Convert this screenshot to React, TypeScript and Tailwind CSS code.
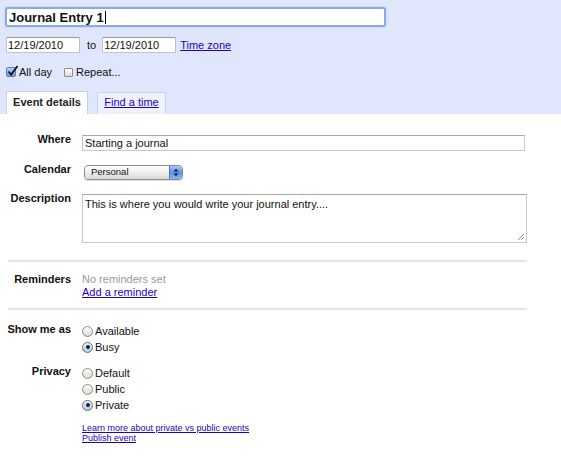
import React from 'react';

const font = "font-['Liberation_Sans',Arial,sans-serif]";

function Label({ children }: { children: React.ReactNode }) {
  return (
    <div className="w-[71px] shrink-0 text-right text-[11px] font-bold leading-[13px] text-[#111]">
      {children}
    </div>
  );
}

function Radio({ checked, label }: { checked?: boolean; label: string }) {
  return (
    <div className="flex h-[16px] items-center">
      <span
        className={`flex h-[11px] w-[11px] items-center justify-center rounded-full border ${
          checked
            ? 'border-[#5f6f8f] bg-gradient-to-b from-[#f4f7fc] to-[#b9c6dc]'
            : 'border-[#8c8c8c] bg-gradient-to-b from-white to-[#d9d9d9]'
        }`}
      >
        {checked && <span className="h-[4px] w-[4px] rounded-full bg-[#14203a]" />}
      </span>
      <span className="ml-[2px] text-[11px] leading-[13px] text-[#111]">{label}</span>
    </div>
  );
}

function DateBox({ value }: { value: string }) {
  return (
    <div className="flex h-[16px] w-[74px] items-center border border-[#c4c4c4] border-t-[#999] bg-white pl-[1px] text-[11px] text-[#111]">
      {value}
    </div>
  );
}

export default function App() {
  return (
    <div className={`h-[460px] w-[561px] overflow-hidden bg-white ${font}`}>
      {/* top bar */}
      <div className="flex flex-col bg-[#e0e6fc] pt-[7px]">
        <div className="ml-[5px] flex h-[20px] w-[381px] items-center rounded-[3px] border-2 border-[#88aae6] bg-white pl-[2px] shadow-[0_0_2px_#a9c2f0]">
          <span className="text-[13px] font-bold leading-none text-[#111]">Journal Entry 1</span>
          <span className="ml-[1px] h-[13px] w-px bg-black" />
        </div>

        <div className="ml-[6px] mt-[10px] flex h-[16px] items-center">
          <DateBox value="12/19/2010" />
          <span className="ml-[7px] mr-[6px] text-[11px] text-[#111]">to</span>
          <DateBox value="12/19/2010" />
          <a className="ml-[4px] text-[11px] text-[#2200cc] underline">Time zone</a>
        </div>

        <div className="ml-[6px] mt-[13px] flex h-[12px] items-center">
          <span className="relative h-[10px] w-[10px] rounded-[2px] border border-[#5a7fb8] bg-gradient-to-b from-[#b8d0f4] to-[#6f9ade]">
            <svg className="absolute -top-[3px] left-[0px]" width="12" height="12" viewBox="0 0 12 12">
              <path d="M1.5 6.5 L4.2 9.5 L10.5 1" fill="none" stroke="#111" strokeWidth="1.8" />
            </svg>
          </span>
          <span className="ml-[3px] text-[11px] text-[#111]">All day</span>
          <span className="ml-[12px] h-[9px] w-[9px] rounded-[1px] border border-[#8c8c8c] bg-gradient-to-b from-white to-[#dcdcdc]" />
          <span className="ml-[3px] text-[11px] text-[#111]">Repeat...</span>
        </div>

        <div className="mt-[13px] flex h-[23px] items-end">
          <div className="ml-[6px] flex h-[23px] w-[82px] items-center justify-center border border-b-0 border-[#c3d0f5] bg-white pb-[2px] text-[11px] font-bold text-[#222]">
            Event details
          </div>
          <div className="ml-[9px] flex h-[22px] w-[69px] items-center justify-center border border-b-0 border-[#c9d4f7] bg-[#eef1fe] pb-[2px]">
            <a className="text-[11px] text-[#2200cc] underline">Find a time</a>
          </div>
        </div>
      </div>

      {/* details */}
      <div className="mt-[21px] flex">
        <div className="-mt-[2px]">
          <Label>Where</Label>
        </div>
        <div className="ml-[11px] flex h-[16px] w-[443px] items-center border border-[#c8c8c8] border-t-[#a8a8a8] pl-[2px] text-[11px] text-[#111]">
          Starting a journal
        </div>
      </div>

      <div className="mt-[14px] flex">
        <div className="-mt-[2px]">
          <Label>Calendar</Label>
        </div>
        <div className="ml-[13px] flex h-[15px] w-[99px] overflow-hidden rounded-[4px] border border-[#8a8a8a] shadow-[0_1px_1px_rgba(0,0,0,0.15)]">
          <div className="flex flex-1 items-center bg-gradient-to-b from-white via-[#f0f0f0] to-[#d8d8d8] pl-[6px] text-[9.5px] text-[#111]">
            Personal
          </div>
          <div className="flex w-[13px] items-center justify-center border-l border-[#4a76c0] bg-gradient-to-b from-[#a9c8f5] via-[#5b92e4] to-[#8ab6f2]">
            <svg width="6" height="9" viewBox="0 0 6 9">
              <path d="M0.5 3.5 L3 0.8 L5.5 3.5 Z" fill="#0f1a33" />
              <path d="M0.5 5.5 L3 8.2 L5.5 5.5 Z" fill="#0f1a33" />
            </svg>
          </div>
        </div>
      </div>

      <div className="mt-[14px] flex">
        <div className="-mt-[2px]">
          <Label>Description</Label>
        </div>
        <div className="relative ml-[11px] h-[49px] w-[445px] border border-[#c8c8c8] border-t-[#a8a8a8] pl-[2px] pt-[3px] text-[11px] leading-[13px] text-[#111]">
          This is where you would write your journal entry....
          <svg className="absolute bottom-[1px] right-[1px]" width="8" height="8" viewBox="0 0 8 8">
            <path d="M1 7 L7 1 M4 7 L7 4" stroke="#9a9a9a" strokeWidth="1" />
          </svg>
        </div>
      </div>

      <div className="ml-[8px] mt-[17px] h-[2px] w-[519px] bg-[#e4e4e4]" />

      <div className="mt-[11px] flex">
        <Label>Reminders</Label>
        <div className="ml-[11px] text-[11px] leading-[13px]">
          <div className="text-[#999]">No reminders set</div>
          <a className="text-[#2200cc] underline">Add a reminder</a>
        </div>
      </div>

      <div className="ml-[8px] mt-[9px] h-[2px] w-[519px] bg-[#e4e4e4]" />

      <div className="mt-[13px] flex">
        <Label>Show me as</Label>
        <div className="ml-[11px]">
          <Radio label="Available" />
          <Radio label="Busy" checked />
        </div>
      </div>

      <div className="mt-[10px] flex">
        <Label>Privacy</Label>
        <div className="ml-[11px]">
          <Radio label="Default" />
          <Radio label="Public" />
          <Radio label="Private" checked />
        </div>
      </div>

      <div className="ml-[82px] mt-[10px] flex flex-col text-[9px] leading-[10px]">
        <a className="text-[#2200cc] underline">Learn more about private vs public events</a>
        <a className="text-[#2200cc] underline">Publish event</a>
      </div>
    </div>
  );
}
